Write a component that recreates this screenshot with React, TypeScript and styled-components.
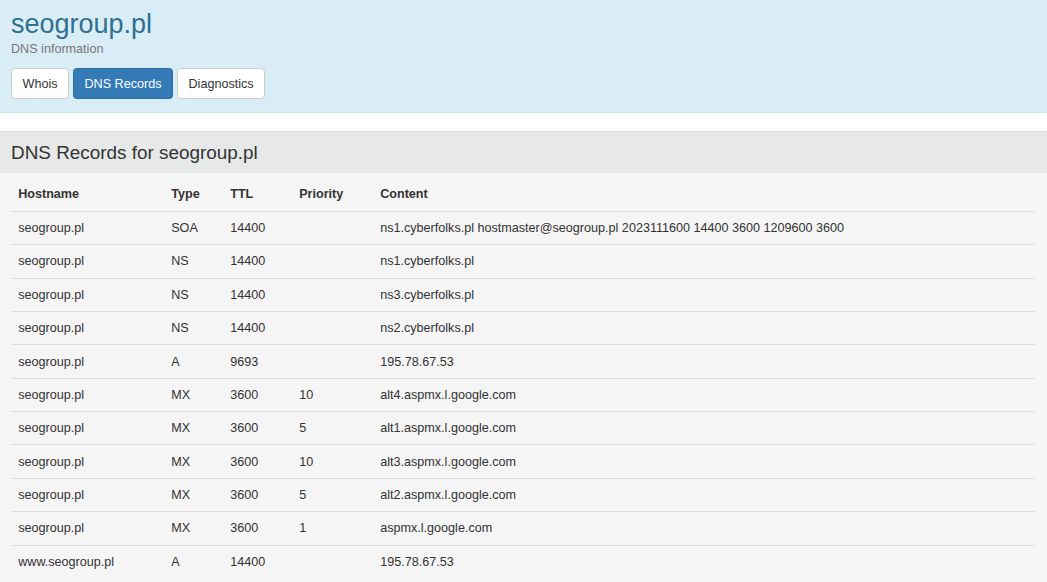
import { createGlobalStyle } from "styled-components";
import styled from "styled-components";

const GlobalStyle = createGlobalStyle`
  html, body {
    margin: 0;
    padding: 0;
    background: #fff;
  }
  body {
    font-family: "Liberation Sans", Arial, Helvetica, sans-serif;
    font-size: 12.6px;
    line-height: 18px;
    color: #333;
  }
`;

const records = [
  { host: "seogroup.pl", type: "SOA", ttl: "14400", prio: "", content: "ns1.cyberfolks.pl hostmaster@seogroup.pl 2023111600 14400 3600 1209600 3600" },
  { host: "seogroup.pl", type: "NS", ttl: "14400", prio: "", content: "ns1.cyberfolks.pl" },
  { host: "seogroup.pl", type: "NS", ttl: "14400", prio: "", content: "ns3.cyberfolks.pl" },
  { host: "seogroup.pl", type: "NS", ttl: "14400", prio: "", content: "ns2.cyberfolks.pl" },
  { host: "seogroup.pl", type: "A", ttl: "9693", prio: "", content: "195.78.67.53" },
  { host: "seogroup.pl", type: "MX", ttl: "3600", prio: "10", content: "alt4.aspmx.l.google.com" },
  { host: "seogroup.pl", type: "MX", ttl: "3600", prio: "5", content: "alt1.aspmx.l.google.com" },
  { host: "seogroup.pl", type: "MX", ttl: "3600", prio: "10", content: "alt3.aspmx.l.google.com" },
  { host: "seogroup.pl", type: "MX", ttl: "3600", prio: "5", content: "alt2.aspmx.l.google.com" },
  { host: "seogroup.pl", type: "MX", ttl: "3600", prio: "1", content: "aspmx.l.google.com" },
  { host: "www.seogroup.pl", type: "A", ttl: "14400", prio: "", content: "195.78.67.53" },
];

const tabs = ["Whois", "DNS Records", "Diagnostics"];

export default function App() {
  return (
    <>
      <GlobalStyle />
      {/* top banner */}
      <Header>
        <Title>seogroup.pl</Title>
        <Subtitle>DNS information</Subtitle>
        <TabRow>
          {tabs.map((t, i) => (
            <TabButton key={t} $active={i === 1}>
              {t}
            </TabButton>
          ))}
        </TabRow>
      </Header>

      {/* records panel */}
      <Panel>
        <PanelHeading>DNS Records for seogroup.pl</PanelHeading>
        <PanelBody>
          <Table>
            <colgroup>
              <col style={{ width: 153 }} />
              <col style={{ width: 59 }} />
              <col style={{ width: 69 }} />
              <col style={{ width: 81 }} />
              <col />
            </colgroup>
            <thead>
              <tr>
                <Th>Hostname</Th>
                <Th>Type</Th>
                <Th>TTL</Th>
                <Th>Priority</Th>
                <Th>Content</Th>
              </tr>
            </thead>
            <tbody>
              {records.map((r, i) => (
                <tr key={i}>
                  <Td>{r.host}</Td>
                  <Td>{r.type}</Td>
                  <Td>{r.ttl}</Td>
                  <Td>{r.prio}</Td>
                  <Td>{r.content}</Td>
                </tr>
              ))}
            </tbody>
          </Table>
        </PanelBody>
      </Panel>
    </>
  );
}

const Header = styled.div`
  background: #d9edf7;
  border-bottom: 1px solid #bce8f1;
  padding: 10px 11px 13px;
`;

const Title = styled.h1`
  margin: 0;
  font-size: 27px;
  font-weight: normal;
  line-height: 1.1;
  color: #31708f;
`;

const Subtitle = styled.div`
  font-size: 12.6px;
  line-height: 18px;
  color: #777;
`;

const TabRow = styled.div`
  display: flex;
  gap: 4px;
  margin-top: 10.5px;
`;

const TabButton = styled.button<{ $active?: boolean }>`
  font-family: "Liberation Sans", Arial, Helvetica, sans-serif;
  font-size: 12.6px;
  line-height: 18.5px;
  padding: 5.4px 10.5px;
  border-radius: 3.6px;
  border: 1px solid ${(p) => (p.$active ? "#2e6da4" : "#ccc")};
  background: ${(p) => (p.$active ? "#337ab7" : "#fff")};
  color: ${(p) => (p.$active ? "#fff" : "#333")};
  cursor: pointer;
`;

const Panel = styled.div`
  margin-top: 18px;
  border-top: 1px solid #ddd;
  background: #f5f5f5;
`;

const PanelHeading = styled.div`
  background: #e7e8e8;
  padding: 10px 11px;
  font-size: 18.9px;
  line-height: 21px;
  color: #333;
`;

const PanelBody = styled.div`
  padding: 3px 12px 4px 11px;
`;

const Table = styled.table`
  width: 100%;
  border-collapse: collapse;
  table-layout: fixed;
`;

const Th = styled.th`
  text-align: left;
  font-weight: bold;
  padding: 8.2px 7.2px 8.2px;
  border-bottom: 1.8px solid #ddd;
`;

const Td = styled.td`
  padding: 7.2px;
  border-top: 1px solid #ddd;
  white-space: nowrap;
`;
